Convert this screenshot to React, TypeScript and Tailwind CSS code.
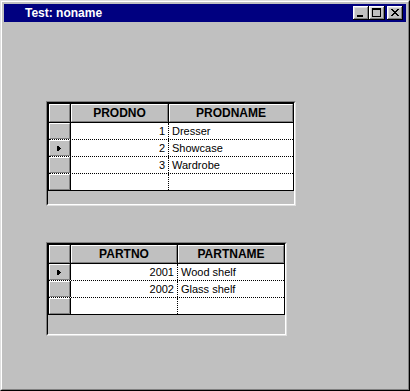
import React from "react";

type Col = { label: string; width?: string };

function Raised({ children }: { children?: React.ReactNode }) {
  return (
    <div className="h-full w-full bg-[#c0c0c0] border-t border-l border-t-white border-l-white border-b border-r border-b-[#808080] border-r-[#808080] flex items-center">
      {children}
    </div>
  );
}

function Marker() {
  return (
    <svg width="5" height="7" viewBox="0 0 5 7" className="ml-[7px] block" shapeRendering="crispEdges">
      <rect x="0" y="1" width="1" height="5" fill="#000" />
      <rect x="1" y="1" width="1" height="5" fill="#000" />
      <rect x="2" y="2" width="1" height="3" fill="#000" />
      <rect x="3" y="3" width="1" height="1" fill="#000" />
    </svg>
  );
}

function Grid({
  outer,
  cols,
  rows,
  current,
  firstW,
}: {
  outer: string;
  cols: Col[];
  rows: [string, string][];
  current: number;
  firstW: string;
}) {
  return (
    <div className={`${outer} border-t border-l border-t-[#808080] border-l-[#808080] border-b border-r border-b-[#dfdfdf] border-r-[#dfdfdf]`}>
      <div className="h-full w-full border-t border-l border-t-black border-l-black border-b border-r border-b-white border-r-white">
        <div className="w-full border border-black bg-white">
          <div className="flex h-[19px] border-b border-black">
            <div className="w-[22px] h-full border-r border-black">
              <Raised />
            </div>
            <div className={`${firstW} h-full border-r border-black`}>
              <Raised>
                <span className="w-full text-center text-[12px] font-bold leading-none text-black">{cols[0].label}</span>
              </Raised>
            </div>
            <div className="flex-1 h-full">
              <Raised>
                <span className="w-full text-center text-[12px] font-bold leading-none text-black">{cols[1].label}</span>
              </Raised>
            </div>
          </div>
          {rows.map((r, i) => {
            const last = i === rows.length - 1;
            return (
              <div
                key={i}
                className={
                  last
                    ? "flex h-[16px]"
                    : "flex h-[17px] border-b border-dotted border-black"
                }
              >
                <div className="w-[22px] h-[16px] border-r border-black">
                  <Raised>{i === current ? <Marker /> : null}</Raised>
                </div>
                <div className={`${firstW} h-[16px] border-r border-dotted border-black text-right pr-[3px] text-[11px] leading-[16px] text-black`}>
                  {r[0]}
                </div>
                <div className="flex-1 h-[16px] pl-[3px] text-[11px] leading-[16px] text-black">{r[1]}</div>
              </div>
            );
          })}
        </div>
      </div>
    </div>
  );
}

function CapButton({ kind }: { kind: "min" | "max" | "close" }) {
  return (
    <div className="w-[16px] h-[14px] bg-[#c0c0c0] shadow-[inset_-1px_-1px_#000,inset_1px_1px_#fff,inset_-2px_-2px_#808080,inset_2px_2px_#dfdfdf]">
      <svg width="16" height="14" viewBox="0 0 16 14" className="block" shapeRendering="crispEdges">
        {kind === "min" && <rect x="4" y="9" width="6" height="2" fill="#000" />}
        {kind === "max" && (
          <g fill="#000">
            <rect x="3" y="2" width="9" height="2" />
            <rect x="3" y="4" width="1" height="7" />
            <rect x="11" y="4" width="1" height="7" />
            <rect x="3" y="10" width="9" height="1" />
          </g>
        )}
        {kind === "close" && (
          <g fill="#000">
            <rect x="4" y="3" width="2" height="1" />
            <rect x="10" y="3" width="2" height="1" />
            <rect x="5" y="4" width="2" height="1" />
            <rect x="9" y="4" width="2" height="1" />
            <rect x="6" y="5" width="4" height="1" />
            <rect x="7" y="6" width="2" height="1" />
            <rect x="6" y="7" width="4" height="1" />
            <rect x="5" y="8" width="2" height="1" />
            <rect x="9" y="8" width="2" height="1" />
            <rect x="4" y="9" width="2" height="1" />
            <rect x="10" y="9" width="2" height="1" />
          </g>
        )}
      </svg>
    </div>
  );
}

export default function App() {
  return (
    <div
      className="w-[410px] h-[391px] bg-[#c0c0c0] border-t border-l border-t-[#dfdfdf] border-l-[#dfdfdf] border-b border-r border-b-black border-r-black"
      style={{ fontFamily: '"Liberation Sans", Arial, sans-serif' }}
    >
      <div className="w-full h-full border-t border-l border-t-white border-l-white border-b border-r border-b-[#808080] border-r-[#808080] p-[2px] flex flex-col">
        <div className="h-[18px] bg-[#000080] flex items-center pl-[21px] pr-[3px]">
          <span className="text-white font-bold text-[12px] leading-none flex-1">Test: noname</span>
          <CapButton kind="min" />
          <CapButton kind="max" />
          <div className="w-[2px]" />
          <CapButton kind="close" />
        </div>
        <div className="flex-1 pl-[42px] pt-[79px]">
          <Grid
            outer="w-[250px] h-[105px]"
            firstW="w-[98px]"
            cols={[{ label: "PRODNO" }, { label: "PRODNAME" }]}
            rows={[
              ["1", "Dresser"],
              ["2", "Showcase"],
              ["3", "Wardrobe"],
              ["", ""],
            ]}
            current={1}
          />
          <div className="h-[36px]" />
          <Grid
            outer="w-[241px] h-[94px]"
            firstW="w-[107px]"
            cols={[{ label: "PARTNO" }, { label: "PARTNAME" }]}
            rows={[
              ["2001", "Wood shelf"],
              ["2002", "Glass shelf"],
              ["", ""],
            ]}
            current={0}
          />
        </div>
      </div>
    </div>
  );
}
